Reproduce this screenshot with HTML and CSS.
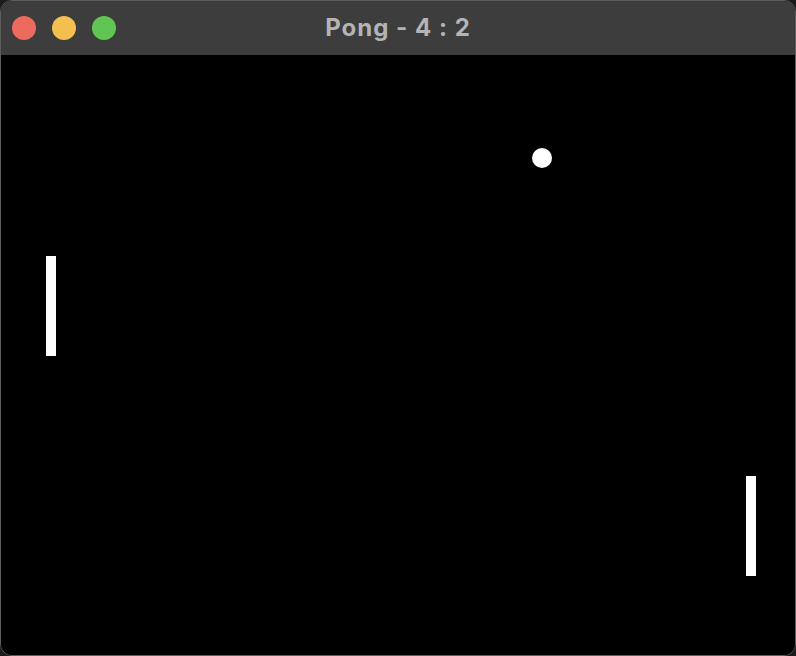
FILE: index.html
```html
<!DOCTYPE html>
<html>
<head>
<meta charset="utf-8">
<link rel="stylesheet" href="styles.css">
</head>
<body>
<div class="window">
  <div class="titlebar">
    <div class="lights">
      <span class="light red"></span>
      <span class="light yellow"></span>
      <span class="light green"></span>
    </div>
    <div class="title">Pong - 4 : 2</div>
  </div>
  <div class="court">
    <div class="paddle left"></div>
    <div class="paddle right"></div>
    <div class="ball"></div>
  </div>
</div>
</body>
</html>
```
FILE: styles.css
```css
html, body {
  margin: 0;
  padding: 0;
  width: 796px;
  height: 656px;
  background: #1c1c1c;
  overflow: hidden;
}
.window {
  box-sizing: border-box;
  width: 796px;
  height: 656px;
  border: 1px solid #5c5d5c;
  border-radius: 12px;
  overflow: hidden;
  display: flex;
  flex-direction: column;
  background: #000;
}
.titlebar {
  position: relative;
  height: 54px;
  flex: 0 0 54px;
  background: #3c3d3c;
  display: flex;
  align-items: center;
  justify-content: center;
}
.lights {
  position: absolute;
  left: 11px;
  top: 15px;
  display: flex;
  gap: 16px;
}
.light {
  width: 24px;
  height: 24px;
  border-radius: 50%;
  display: block;
}
.red { background: #ec6a5e; }
.yellow { background: #f4bf4f; }
.green { background: #61c554; }
.title {
  font-family: "Inter", "Liberation Sans", sans-serif;
  font-weight: 700;
  font-size: 24px;
  letter-spacing: 1px;
  color: #b4b4b4;
  margin-top: -2px;
}
.court {
  position: relative;
  flex: 1;
  background: #000;
}
.paddle {
  position: absolute;
  width: 10px;
  height: 100px;
  background: #fff;
}
.paddle.left { left: 45px; top: 201px; }
.paddle.right { left: 745px; top: 421px; }
.ball {
  position: absolute;
  left: 531px;
  top: 93px;
  width: 20px;
  height: 20px;
  border-radius: 50%;
  background: #fff;
}
```
